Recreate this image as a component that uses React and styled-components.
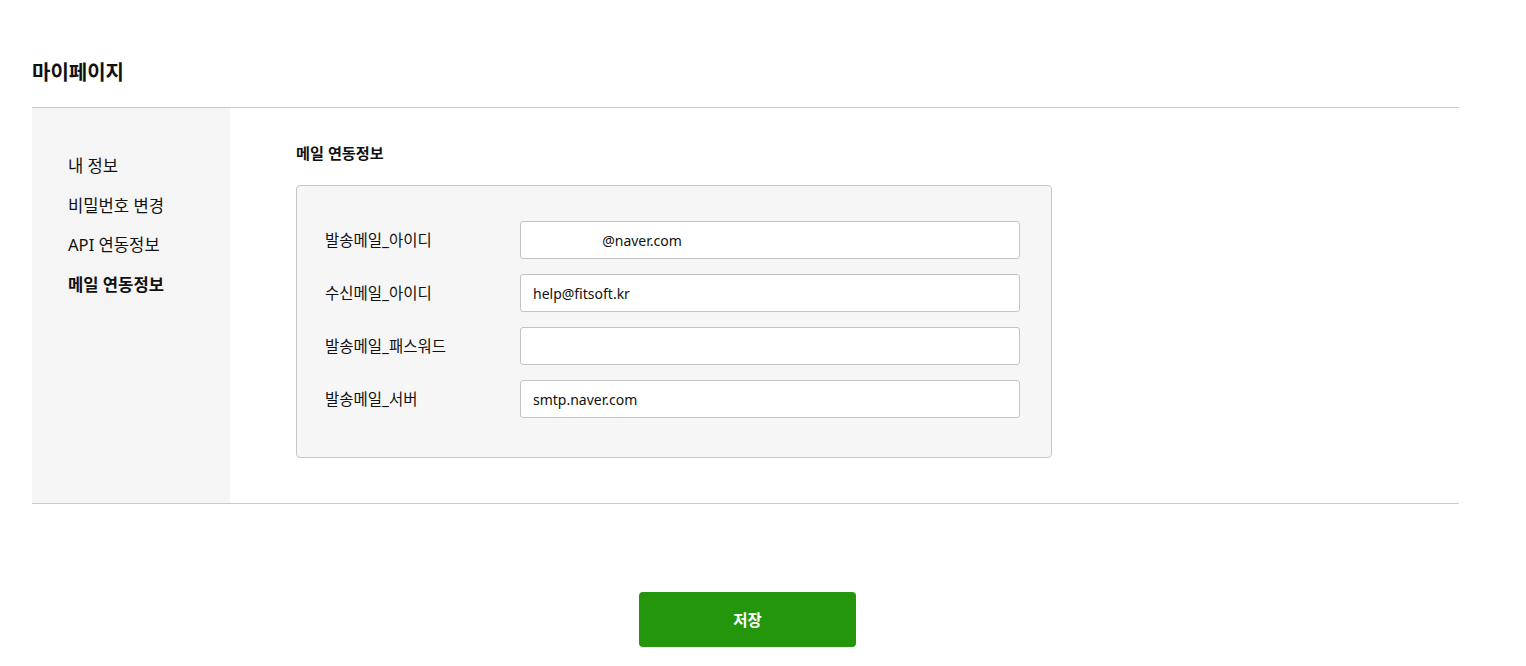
import React from 'react';
import styled, { createGlobalStyle } from 'styled-components';

const GlobalStyle = createGlobalStyle`
  body {
    margin: 0;
    background: #fff;
    font-family: "Noto Sans", "Noto Sans CJK KR", sans-serif;
    color: #111;
  }
  * { box-sizing: border-box; }
`;

const Page = styled.div`
  padding: 0 67px 0 32px;
`;

const Title = styled.h1`
  margin: 0;
  height: 107px;
  padding-top: 60px;
  font-size: 20px;
  font-weight: 700;
  line-height: 26px;
`;

const Panel = styled.div`
  display: flex;
  border-top: 1px solid #c9c9c9;
  border-bottom: 1px solid #c9c9c9;
`;

const Sidebar = styled.nav`
  width: 198px;
  flex-shrink: 0;
  background: #f5f5f5;
  padding: 46px 0 0 36px;
  display: flex;
  flex-direction: column;
  gap: 15.5px;
`;

const MenuItem = styled.div`
  font-size: 16.6px;
  line-height: 24px;
  font-weight: ${(p) => (p.$active ? 700 : 400)};
  cursor: pointer;
`;

const Content = styled.section`
  flex: 1;
  padding: 35px 0 45px 66px;
`;

const SectionTitle = styled.h2`
  margin: 0 0 22px;
  font-size: 15.2px;
  font-weight: 700;
  line-height: 20px;
`;

const FormBox = styled.div`
  width: 756px;
  background: #f6f6f6;
  border: 1px solid #c6c6c6;
  border-radius: 4px;
  padding: 35px 31px 39px 28px;
  display: flex;
  flex-direction: column;
  gap: 15px;
`;

const Row = styled.div`
  display: grid;
  grid-template-columns: 195px 500px;
  align-items: center;
`;

const Label = styled.label`
  font-size: 15.5px;
  line-height: 20px;
`;

const Input = styled.input`
  height: 38px;
  width: 500px;
  border: 1px solid #c4c4c4;
  border-radius: 3px;
  background: #fff;
  padding: 0 12px;
  font-family: "Noto Sans", "Noto Sans CJK KR", sans-serif;
  font-size: 14px;
  color: #111;
  outline: none;
`;

const Footer = styled.div`
  display: flex;
  justify-content: center;
  padding: 88px 0 19px;
`;

const SaveButton = styled.button`
  width: 217px;
  height: 55px;
  margin-left: 4px;
  border: none;
  border-radius: 4px;
  background: #23960b;
  color: #fff;
  font-family: "Noto Sans", "Noto Sans CJK KR", sans-serif;
  font-size: 15.5px;
  font-weight: 700;
  cursor: pointer;
`;

const menu = ['내 정보', '비밀번호 변경', 'API 연동정보', '메일 연동정보'];

const fields = [
  { label: '발송메일_아이디', value: '                   @naver.com' },
  { label: '수신메일_아이디', value: 'help@fitsoft.kr' },
  { label: '발송메일_패스워드', value: '' },
  { label: '발송메일_서버', value: 'smtp.naver.com' },
];

const App = () => (
  <>
    <GlobalStyle />
    <Page>
      <Title>마이페이지</Title>
      <Panel>
        <Sidebar>
          {menu.map((m, i) => (
            <MenuItem key={m} $active={i === menu.length - 1}>
              {m}
            </MenuItem>
          ))}
        </Sidebar>
        <Content>
          <SectionTitle>메일 연동정보</SectionTitle>
          <FormBox>
            {fields.map((f) => (
              <Row key={f.label}>
                <Label>{f.label}</Label>
                <Input
                  type={f.label.includes('패스워드') ? 'password' : 'text'}
                  defaultValue={f.value}
                />
              </Row>
            ))}
          </FormBox>
        </Content>
      </Panel>
      <Footer>
        <SaveButton>저장</SaveButton>
      </Footer>
    </Page>
  </>
);

export default App;
